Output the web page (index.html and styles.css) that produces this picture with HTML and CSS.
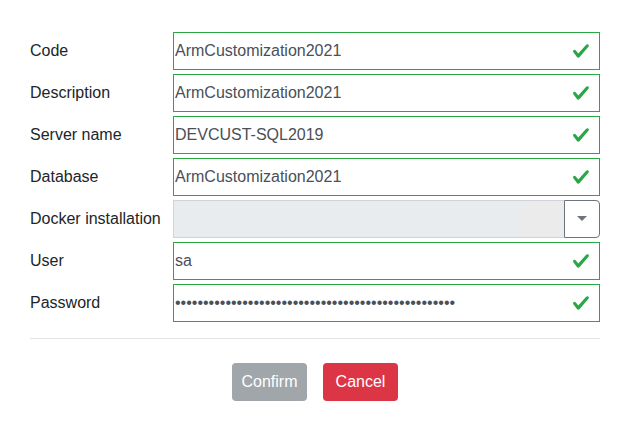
FILE: index.html
```html
<!DOCTYPE html>
<html>
<head>
<meta charset="utf-8">
<link rel="stylesheet" href="styles.css">
</head>
<body>
<div class="dialog">
  <div class="form">
    <label class="label">Code</label>
    <div class="field valid"><input class="input" type="text" value="ArmCustomization2021" readonly><svg class="check" viewBox="0 0 8 8"><path d="M2.3 6.73L.6 4.53c-.4-1.04.46-1.4 1.1-.8l1.1 1.4 3.4-3.8c.6-.63 1.6-.27 1.2.7l-4 4.6c-.43.5-.8.4-1.1.1z"/></svg></div>

    <label class="label">Description</label>
    <div class="field valid"><input class="input" type="text" value="ArmCustomization2021" readonly><svg class="check" viewBox="0 0 8 8"><path d="M2.3 6.73L.6 4.53c-.4-1.04.46-1.4 1.1-.8l1.1 1.4 3.4-3.8c.6-.63 1.6-.27 1.2.7l-4 4.6c-.43.5-.8.4-1.1.1z"/></svg></div>

    <label class="label">Server name</label>
    <div class="field valid"><input class="input" type="text" value="DEVCUST-SQL2019" readonly><svg class="check" viewBox="0 0 8 8"><path d="M2.3 6.73L.6 4.53c-.4-1.04.46-1.4 1.1-.8l1.1 1.4 3.4-3.8c.6-.63 1.6-.27 1.2.7l-4 4.6c-.43.5-.8.4-1.1.1z"/></svg></div>

    <label class="label">Database</label>
    <div class="field valid"><input class="input" type="text" value="ArmCustomization2021" readonly><svg class="check" viewBox="0 0 8 8"><path d="M2.3 6.73L.6 4.53c-.4-1.04.46-1.4 1.1-.8l1.1 1.4 3.4-3.8c.6-.63 1.6-.27 1.2.7l-4 4.6c-.43.5-.8.4-1.1.1z"/></svg></div>

    <label class="label">Docker installation</label>
    <div class="select">
      <div class="select-box"><span class="select-fill"></span><span class="select-tail"></span></div>
      <div class="select-btn"><span class="caret"></span></div>
    </div>

    <label class="label">User</label>
    <div class="field valid"><input class="input" type="text" value="sa" readonly><svg class="check" viewBox="0 0 8 8"><path d="M2.3 6.73L.6 4.53c-.4-1.04.46-1.4 1.1-.8l1.1 1.4 3.4-3.8c.6-.63 1.6-.27 1.2.7l-4 4.6c-.43.5-.8.4-1.1.1z"/></svg></div>

    <label class="label">Password</label>
    <div class="field valid"><input class="input" type="password" value="abcdefghijabcdefghijabcdefghijabcdefghijabcdefghij" readonly><svg class="check" viewBox="0 0 8 8"><path d="M2.3 6.73L.6 4.53c-.4-1.04.46-1.4 1.1-.8l1.1 1.4 3.4-3.8c.6-.63 1.6-.27 1.2.7l-4 4.6c-.43.5-.8.4-1.1.1z"/></svg></div>
  </div>
  <div class="separator"></div>
  <div class="actions">
    <button class="btn btn-confirm" type="button">Confirm</button>
    <button class="btn btn-cancel" type="button">Cancel</button>
  </div>
</div>
</body>
</html>
```

FILE: styles.css
```css
html, body {
  margin: 0;
  padding: 0;
  background: #ffffff;
}

body {
  font-family: "Liberation Sans", Arial, sans-serif;
  font-size: 16px;
  color: #212529;
}

.dialog {
  width: 570px;
  padding: 32px 27px 0 30px;
}

.form {
  display: grid;
  grid-template-columns: 143px 1fr;
  grid-auto-rows: 38px;
  row-gap: 4px;
}

.label {
  display: flex;
  align-items: center;
  color: #212529;
  font-size: 16px;
}

.field {
  position: relative;
  display: flex;
  box-sizing: border-box;
  height: 38px;
  border: 1px solid #28a745;
  background: #fff;
}

.input {
  flex: 1;
  min-width: 0;
  border: 0;
  outline: 0;
  margin: 0;
  padding: 0 36px 0 1px;
  background: transparent;
  font-family: "Liberation Sans", Arial, sans-serif;
  font-size: 16px;
  color: #495057;
}

.check {
  position: absolute;
  right: 9px;
  top: 9px;
  width: 18px;
  height: 18px;
  fill: #28a745;
}

.select {
  display: flex;
  height: 38px;
}

.select-box {
  flex: 1;
  display: flex;
  box-sizing: border-box;
  border: 1px solid #ced4da;
  border-right: 0;
  border-radius: 0;
  background: #e9ecef;
}

.select-fill {
  flex: 1;
}

.select-tail {
  width: 45px;
  background: #ebebeb;
}

.select-btn {
  width: 36px;
  box-sizing: border-box;
  border: 1px solid #6c757d;
  border-radius: 0 4px 4px 0;
  background: #fff;
  display: flex;
  align-items: center;
  justify-content: center;
}

.caret {
  width: 0;
  height: 0;
  border-left: 5px solid transparent;
  border-right: 5px solid transparent;
  border-top: 5px solid #6c757d;
  margin-top: -1px;
}

.separator {
  margin-top: 16px;
  height: 1px;
  background: #e3e3e3;
}

.actions {
  display: flex;
  justify-content: center;
  gap: 16px;
  margin-top: 24px;
}

.btn {
  width: 75px;
  height: 38px;
  padding: 0;
  border: 0;
  border-radius: 4px;
  font-family: "Liberation Sans", Arial, sans-serif;
  font-size: 16px;
  color: #fff;
}

.btn-confirm {
  background: #a1a6ab;
}

.btn-cancel {
  background: #dc3545;
}
```
